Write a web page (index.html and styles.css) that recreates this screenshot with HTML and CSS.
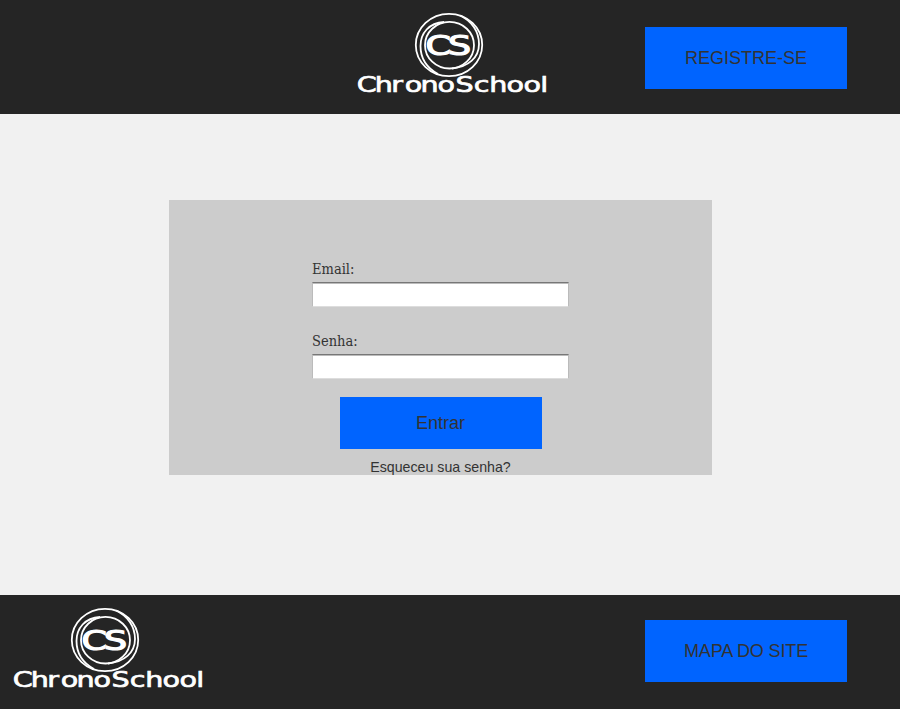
FILE: index.html
```html
<!DOCTYPE html>
<html lang="pt-BR">
<head>
<meta charset="utf-8">
<title>ChronoSchool</title>
<link rel="stylesheet" href="styles.css">
</head>
<body>
<header class="bar">
  <svg class="logo logo-center" viewBox="0 0 212 114">
    <g class="rings">
      <ellipse cx="105" cy="45" rx="33.2" ry="31.2"/>
      <ellipse cx="105.500" cy="45.200" rx="24.500" ry="23.300"/>
      <path d="M100 22C85 23 76.500 33 76.500 46C76.500 58 83 68 94 74"/>
      <path d="M116 15.500C128 21 135 32 135 44C135 58 124 67 108 68.500"/>
    </g>
    <text class="monogram" transform="translate(0 55) scale(1.4 1)" x="58.300 74.300">CS</text>
    <text class="wordmark" transform="translate(0 92.400) scale(1.3 1)" x="9.800 23.700 36.300 46.700 58.800 72 85.700 99.800 111.800 125 138 151">ChronoSchool</text>
  </svg>
  <a class="button bar-button">REGISTRE-SE</a>
</header>
<main class="main">
  <form class="login">
    <label class="label" for="email">Email:</label>
    <input class="input" id="email" type="email">
    <label class="label" for="senha">Senha:</label>
    <input class="input" id="senha" type="password">
    <button class="button submit" type="button">Entrar</button>
    <a class="forgot">Esqueceu sua senha?</a>
  </form>
</main>
<footer class="bar footer">
  <svg class="logo" viewBox="0 0 212 114">
    <g class="rings">
      <ellipse cx="105" cy="45" rx="33.2" ry="31.2"/>
      <ellipse cx="105.500" cy="45.200" rx="24.500" ry="23.300"/>
      <path d="M100 22C85 23 76.500 33 76.500 46C76.500 58 83 68 94 74"/>
      <path d="M116 15.500C128 21 135 32 135 44C135 58 124 67 108 68.500"/>
    </g>
    <text class="monogram" transform="translate(0 55) scale(1.4 1)" x="58.300 74.300">CS</text>
    <text class="wordmark" transform="translate(0 92.400) scale(1.3 1)" x="9.800 23.700 36.300 46.700 58.800 72 85.700 99.800 111.800 125 138 151">ChronoSchool</text>
  </svg>
  <a class="button bar-button">MAPA DO SITE</a>
</footer>
</body>
</html>
```
FILE: styles.css
```css
* { box-sizing: border-box; }
body {
  margin: 0;
  height: 709px;
  overflow: hidden;
  display: flex;
  flex-direction: column;
  background: #f1f1f1;
  color: #333;
  font-family: "Liberation Sans", Arial, sans-serif;
}
.bar {
  display: flex;
  align-items: flex-start;
  justify-content: space-between;
  height: 114px;
  flex: none;
  padding-right: 53px;
  background: #252525;
}
.logo { width: 212px; height: 114px; flex: none; }
.logo-center { margin-left: 344px; }
.rings { fill: none; stroke: #fff; stroke-width: 1.8; }
.monogram, .wordmark { fill: #fff; stroke: #fff; font-family: "DejaVu Sans", sans-serif; }
.monogram { font-size: 26px; stroke-width: 1.2; }
.wordmark { font-size: 22px; stroke-width: 0.7; }
.button {
  display: flex;
  align-items: center;
  justify-content: center;
  width: 202px;
  border: 0;
  padding: 0;
  background: #0064ff;
  color: #333;
  font: 18px "Liberation Sans", Arial, sans-serif;
}
.bar-button { height: 62px; margin-top: 27px; }
.footer .bar-button { margin-top: 25px; letter-spacing: -0.13px; }
.main {
  height: 481px;
  padding: 86px 0 0 169px;
}
.login {
  display: flex;
  flex-direction: column;
  align-items: center;
  width: 543px;
  height: 275px;
  padding-top: 58px;
  background: #ccc;
}
.label {
  width: 257px;
  height: 24px;
  font: 14.5px/23px "DejaVu Serif Condensed", "DejaVu Serif", serif;
  font-stretch: condensed;
}
.input {
  width: 257px;
  height: 25px;
  margin: 0 0 23px;
  padding: 0 4px;
  border: 1px solid #bbb;
  border-top-color: #777;
  border-bottom-color: #ddd;
  border-radius: 0;
  background: #fff;
  box-shadow: inset 0 1px #bbb;
}
.submit { height: 52px; margin-top: -5px; }
.forgot { margin-top: 10px; font-size: 14.2px; line-height: 16px; }
```
